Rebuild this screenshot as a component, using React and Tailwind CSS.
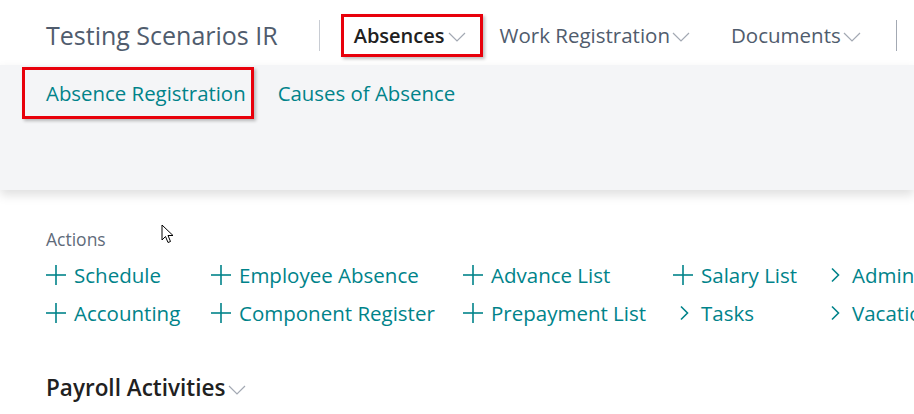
import React from 'react';

const font = { fontFamily: '"Open Sans", "Noto Sans", sans-serif' };

function ChevronDown({ className = '' }) {
    return (
        <svg width="18" height="10" viewBox="0 0 18 10" className={className}>
            <polyline points="1,1 9,9 17,1" fill="none" stroke="#a3a9b3" strokeWidth="1.2" />
        </svg>
    );
}

function PlusIcon() {
    return (
        <svg width="20" height="20" viewBox="0 0 20 20">
            <line x1="10" y1="0" x2="10" y2="20" stroke="#00838a" strokeWidth="1.6" />
            <line x1="0" y1="10" x2="20" y2="10" stroke="#00838a" strokeWidth="1.6" />
        </svg>
    );
}

function ChevronRight() {
    return (
        <svg width="20" height="20" viewBox="0 0 20 20">
            <polyline points="6,3.5 12.5,10 6,16.5" fill="none" stroke="#00838a" strokeWidth="1.6" />
        </svg>
    );
}

function Action({ label, icon = 'plus' }) {
    return (
        <div className="flex items-center h-[38px] whitespace-nowrap">
            <span className="w-[28px] flex items-center">
                {icon === 'plus' ? <PlusIcon /> : <span className="ml-[2px]"><ChevronRight /></span>}
            </span>
            <span className="text-[20.5px] text-[#00838a]">{label}</span>
        </div>
    );
}

export default function App() {
    const columns = [
        { w: 'w-[165px]', items: [['Schedule', 'plus'], ['Accounting', 'plus']] },
        { w: 'w-[252px]', items: [['Employee Absence', 'plus'], ['Component Register', 'plus']] },
        { w: 'w-[210px]', items: [['Advance List', 'plus'], ['Prepayment List', 'plus']] },
        { w: 'w-[151px]', items: [['Salary List', 'plus'], ['Tasks', 'chevron']] },
        { w: 'w-[200px]', items: [['Administration', 'chevron'], ['Vacation', 'chevron']] },
    ];

    return (
        <div className="w-[914px] h-[414px] overflow-hidden bg-white relative" style={font}>
            {/* Top navigation */}
            <div className="h-[65px] flex items-center pl-[46px] pt-[6px] whitespace-nowrap">
                <span className="text-[25px] text-[#505c6d]">Testing Scenarios IR</span>
                <div className="w-px h-[31px] bg-[#c8ccd3] ml-[41px]" />
                <div className="ml-[21px] h-[43px] border-[3px] border-[#e8000b] shadow-[2px_2px_3px_rgba(0,0,0,0.25)] flex items-center pl-[10px] pr-[14px]">
                    <span className="text-[20px] font-semibold text-[#212121]">Absences</span>
                    <ChevronDown className="ml-[3px] mt-[2px]" />
                </div>
                <div className="ml-[17px] flex items-center">
                    <span className="text-[20.5px] text-[#505c6d]">Work Registration</span>
                    <ChevronDown className="ml-[2px] mt-[2px]" />
                </div>
                <div className="ml-[41px] flex items-center">
                    <span className="text-[20.5px] text-[#505c6d]">Documents</span>
                    <ChevronDown className="ml-[2px] mt-[2px]" />
                </div>
                <div className="w-px h-[31px] bg-[#a3a9b3] ml-[35px]" />
            </div>

            {/* Sub navigation band */}
            <div className="h-[125px] bg-[#f4f5f7] shadow-[0_5px_10px_rgba(0,0,0,0.13)] relative z-10">
                <div className="flex items-center pl-[22px] pt-[2px] whitespace-nowrap">
                    <div className="h-[52px] border-[3px] border-[#e8000b] shadow-[2px_2px_3px_rgba(0,0,0,0.25)] flex items-center pl-[21px] pr-[5px]">
                        <span className="text-[20.4px] text-[#00838a]">Absence Registration</span>
                    </div>
                    <span className="ml-[24px] text-[20.4px] text-[#00838a]">Causes of Absence</span>
                </div>
            </div>

            {/* Content */}
            <div className="pl-[46px] pt-[38px]">
                <div className="text-[17.5px] leading-[22px] text-[#5f6b7a]">Actions</div>
                <div className="flex mt-[6px]">
                    {columns.map((col, i) => (
                        <div key={i} className={`${col.w} shrink-0 flex flex-col`}>
                            {col.items.map(([label, icon]) => (
                                <Action key={label} label={label} icon={icon} />
                            ))}
                        </div>
                    ))}
                </div>
                <div className="mt-[41px] flex items-center h-[30px]">
                    <span className="text-[22.5px] font-semibold text-[#212121]">Payroll Activities</span>
                    <ChevronDown className="ml-[3px] mt-[3px]" />
                </div>
            </div>

            {/* Mouse pointer */}
            <svg className="absolute left-[161px] top-[224px]" width="14" height="21" viewBox="0 0 14 21">
                <path d="M1 1 L1 16 L4.5 12.5 L7 18.5 L9.5 17.5 L7 11.5 L12 11.5 Z" fill="#fff" stroke="#000" strokeWidth="1" strokeLinejoin="round" />
            </svg>
        </div>
    );
}
